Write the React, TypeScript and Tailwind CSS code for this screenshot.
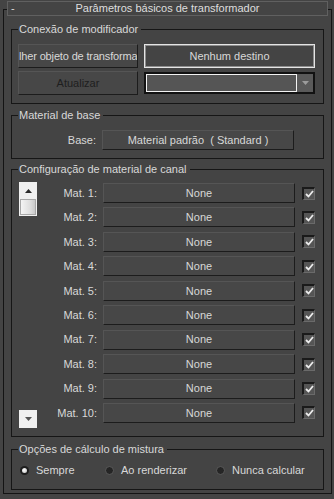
import React from "react"

const mats = ["Mat. 1:", "Mat. 2:", "Mat. 3:", "Mat. 4:", "Mat. 5:", "Mat. 6:", "Mat. 7:", "Mat. 8:", "Mat. 9:", "Mat. 10:"]

function Group({ title, className, children }: { title: string; className?: string; children: React.ReactNode }) {
  return (
    <div className={"relative mx-[7px] border border-[#161616] " + (className ?? "")}>
      <span className="absolute -top-[8px] left-[6px] bg-[#444444] pl-[1px] pr-[3px] leading-[14px] whitespace-nowrap">
        {title}
      </span>
      {children}
    </div>
  )
}

function FlatButton({ children, className }: { children: React.ReactNode; className?: string }) {
  return (
    <div
      className={
        "flex items-center justify-center overflow-hidden whitespace-nowrap border-t border-l border-t-[#555555] border-l-[#555555] border-b border-r border-b-[#1c1c1c] border-r-[#1c1c1c] bg-[#474747] " +
        (className ?? "")
      }
    >
      {children}
    </div>
  )
}

function Check() {
  return (
    <div className="flex h-[13px] w-[13px] items-center justify-center border-t-2 border-l-2 border-t-[#1a1a1a] border-l-[#1a1a1a] border-b border-r border-b-[#6a6a6a] border-r-[#6a6a6a] bg-[#555555]">
      <svg width="9" height="8" viewBox="0 0 9 8">
        <path d="M1 4 L3.5 6.5 L8 1" fill="none" stroke="#ececec" strokeWidth="1.8" />
      </svg>
    </div>
  )
}

function Radio({ on }: { on?: boolean }) {
  return on ? (
    <div className="flex h-[9px] w-[9px] items-center justify-center rounded-full bg-[#1e1e1e]">
      <div className="h-[5px] w-[5px] rounded-full bg-[radial-gradient(circle_at_40%_40%,#ffffff,#bdbdbd)]" />
    </div>
  ) : (
    <div className="h-[9px] w-[9px] rounded-full border border-[#5a5a5a] bg-[#252525]" />
  )
}

export default function App() {
  return (
    <div
      className="h-[499px] w-[334px] overflow-hidden bg-[#444444] text-[11px] text-[#d8d8d8]"
      style={{ fontFamily: '"Liberation Sans", Arial, sans-serif' }}
    >
      {/* rollout header */}
      <div className="relative z-10 ml-[7px] mt-[1px] flex h-[15px] w-[321px] items-center border border-[#606060] bg-[#444444]">
        <span className="pl-[3px] leading-none">-</span>
        <span className="absolute inset-0 flex items-center justify-center leading-none text-[#dedede]">
          Parâmetros básicos de transformador
        </span>
      </div>

      {/* rollout body */}
      <div className="-mt-[7px] ml-[3px] w-[329px] border border-[#141414] pb-[3px] pt-[19px]">
        <Group title="Conexão de modificador" className="px-[6px] pb-[8px] pt-[14px]">
          <div className="flex gap-[6px]">
            <FlatButton className="h-[24px] w-[120px] !justify-start tracking-[-0.15px]">lher objeto de transforma</FlatButton>
            <div className="flex h-[24px] w-[171px] items-center justify-center border border-[#e4e4e4] shadow-[inset_0_0_0_1px_#8c8c8c]">
              Nenhum destino
            </div>
          </div>
          <div className="mt-[3px] flex gap-[6px]">
            <FlatButton className="h-[24px] w-[120px] text-[#1e1e1e]">Atualizar</FlatButton>
            <div className="mt-[1px] flex h-[22px] w-[171px] border-2 border-[#121212]">
              <div className="flex-1 border border-[#f2f2f2] bg-[#555555]" />
              <div className="flex w-[16px] items-center justify-center bg-[#5a5a5a]">
                <svg width="7" height="4" viewBox="0 0 7 4">
                  <path d="M0 0 H7 L3.5 4 Z" fill="#9c9c9c" />
                </svg>
              </div>
            </div>
          </div>
        </Group>

        <Group title="Material de base" className="mt-[11px] pb-[8px] pt-[14px]">
          <div className="flex items-center">
            <span className="w-[84px] text-right">Base:</span>
            <FlatButton className="ml-[6px] h-[20px] w-[192px]">Material padrão&nbsp; ( Standard )</FlatButton>
          </div>
        </Group>

        <Group title="Configuração de material de canal" className="mt-[10px] flex pb-[8px] pl-[7px] pt-[12px]">
          <div className="flex h-[246px] w-[18px] flex-col justify-between">
            <div className="flex flex-col bg-[#f0f0f0]">
              <div className="flex h-[17px] items-center justify-center">
                <svg width="7" height="4" viewBox="0 0 7 4">
                  <path d="M0 4 H7 L3.5 0 Z" fill="#2a2a2a" />
                </svg>
              </div>
              <div className="mx-[1px] mb-[1px] h-[16px] border border-[#a8a8a8] bg-[linear-gradient(90deg,#f4f4f4,#dcdcdc_70%,#c9c9c9)]" />
            </div>
            <div className="flex h-[18px] items-center justify-center bg-[#f0f0f0]">
              <svg width="7" height="4" viewBox="0 0 7 4">
                <path d="M0 0 H7 L3.5 4 Z" fill="#555555" />
              </svg>
            </div>
          </div>
          <div className="mt-[1px] flex flex-col gap-[4.44px]">
            {mats.map((m) => (
              <div key={m} className="flex h-[20px] items-center">
                <span className="w-[60px] text-right">{m}</span>
                <FlatButton className="ml-[6px] h-[20px] w-[192px]">None</FlatButton>
                <div className="ml-[7px]">
                  <Check />
                </div>
              </div>
            ))}
          </div>
        </Group>

        <Group title="Opções de cálculo de mistura" className="mt-[12px] flex pb-[12px] pl-[8px] pt-[14px]">
          <div className="flex h-[13px] w-[85px] items-center gap-[7px]">
            <Radio on />
            <span>Sempre</span>
          </div>
          <div className="flex h-[13px] w-[111px] items-center gap-[7px]">
            <Radio />
            <span>Ao renderizar</span>
          </div>
          <div className="flex h-[13px] items-center gap-[7px]">
            <Radio />
            <span>Nunca calcular</span>
          </div>
        </Group>
      </div>
    </div>
  )
}
